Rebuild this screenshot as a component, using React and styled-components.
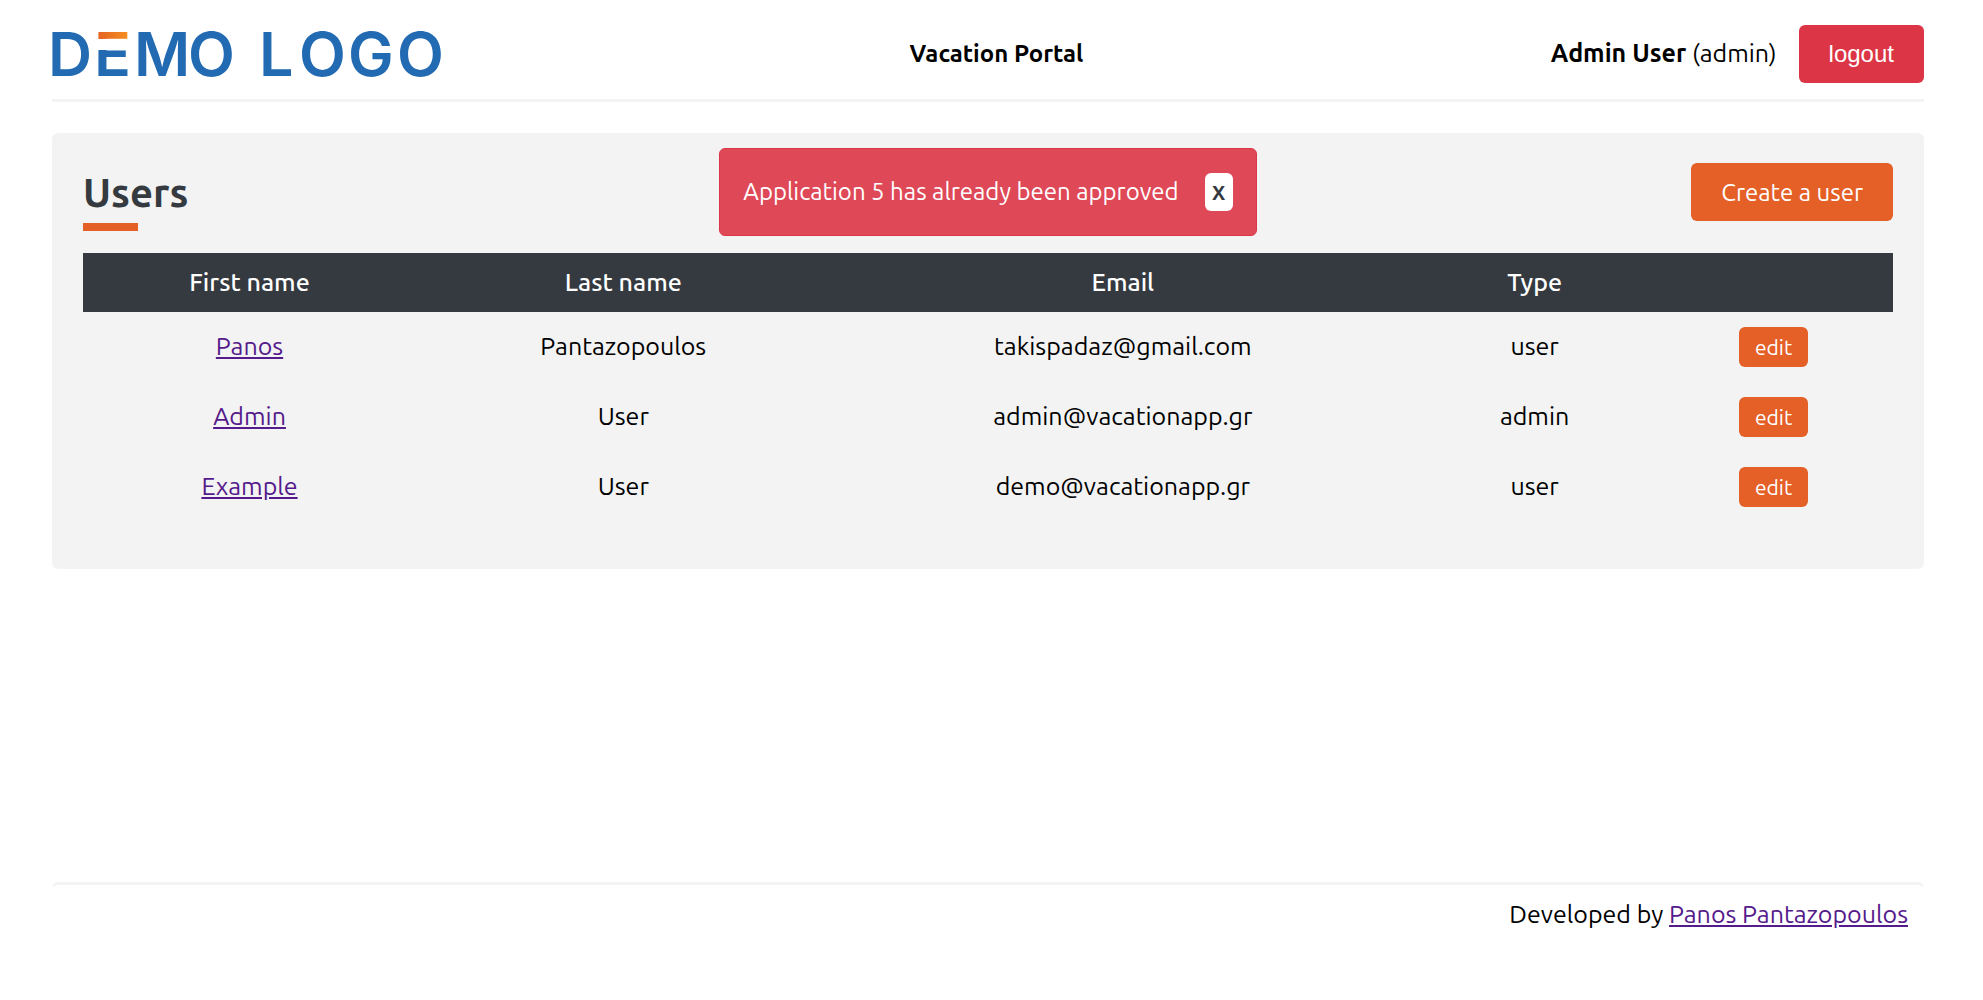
import React, { useState } from "react";
import styled, { createGlobalStyle } from "styled-components";

const colors = {
  orange: "#e46026",
  red: "#dc3545",
  dark: "#343a40",
  panel: "#f3f3f3",
  blue: "#226bb3",
  visited: "#551a8b",
};

const GlobalStyle = createGlobalStyle`
  * { box-sizing: border-box; }
  body {
    margin: 0;
    background: #fff;
    color: #000;
    font-family: Ubuntu, "Noto Sans", sans-serif;
    font-size: 25px;
    line-height: 30px;
  }
`;

const Page = styled.div`
  display: flex;
  flex-direction: column;
  min-height: 100vh;
  padding: 0 59px 0 52px;
`;

const Header = styled.header`
  display: flex;
  align-items: center;
  justify-content: space-between;
  padding: 25px 0 16px;
  border-bottom: 3px solid ${colors.panel};
`;

const LogoImage = styled.svg`
  display: block;
  width: 390px;
  height: 58px;
  overflow: visible;
  fill: ${colors.blue};
  font-family: Inter, sans-serif;
  font-optical-sizing: none;
  font-size: 61px;
  font-weight: 600;
`;

const PortalName = styled.div`
  font-size: 24px;
  font-weight: 700;
`;

const Account = styled.div`
  display: flex;
  align-items: center;
  gap: 22px;
`;

const AccountName = styled.span`
  padding-bottom: 2px;
`;

const Button = styled.button`
  height: ${(p) => (p.$small ? "40px" : "58px")};
  padding: 0 ${(p) => (p.$small ? "16px" : "30px")};
  border: 0;
  border-radius: 6px;
  background: ${(p) => (p.$danger ? colors.red : colors.orange)};
  color: #fff;
  font-family: ${(p) => (p.$danger ? '"Liberation Sans", Arial, sans-serif' : "inherit")};
  font-size: ${(p) => (p.$small ? "21px" : "24px")};
  cursor: pointer;
`;

const Main = styled.main`
  flex: 1;
  padding: 31px 0;
`;

const Panel = styled.section`
  padding: 15px 31px 47px;
  border-radius: 6px;
  background: ${colors.panel};
`;

const PanelHeader = styled.div`
  display: grid;
  grid-template-columns: 1fr auto 1fr;
  align-items: center;
  min-height: 88px;
  margin-bottom: 17px;
`;

const Title = styled.h1`
  align-self: end;
  margin: 0;
  padding-bottom: 5px;
  color: ${colors.dark};
  font-size: 40px;
  font-weight: 700;
  line-height: 52px;

  &::after {
    content: "";
    display: block;
    width: 55px;
    height: 8px;
    margin-top: 4px;
    background: ${colors.orange};
  }
`;

const Alert = styled.div`
  grid-column: 2;
  display: flex;
  align-items: center;
  gap: 26px;
  height: 88px;
  padding: 0 23px;
  border: 1px solid ${colors.red};
  border-radius: 6px;
  background: #de4857;
  color: #fff;
  font-size: 24px;
`;

const CloseButton = styled.button`
  width: 28px;
  height: 38px;
  padding: 0;
  border: 0;
  border-radius: 6px;
  background: #fff;
  color: ${colors.dark};
  font-family: inherit;
  font-size: 20px;
  font-weight: 700;
  cursor: pointer;
`;

const Actions = styled.div`
  grid-column: 3;
  display: flex;
  justify-content: flex-end;
`;

const Table = styled.table`
  width: 100%;
  table-layout: fixed;
  border-collapse: collapse;
  text-align: center;
`;

const Column = styled.col`
  width: ${(p) => p.$width};
`;

const HeadCell = styled.th`
  height: 59px;
  padding: 0 0 2px;
  background: ${colors.dark};
  color: #fff;
  font-weight: 500;
`;

const Cell = styled.td`
  height: 70px;
  padding: 0 0 2px;
`;

const ActionCell = styled.td`
  height: 70px;
  padding: 0;
`;

const Link = styled.a`
  color: ${colors.visited};
  text-decoration: underline;
`;

const Footer = styled.footer`
  min-height: 118px;
  padding: 14px 16px;
  border-top: 3px solid ${colors.panel};
  border-radius: 6px;
  text-align: right;
`;

const users = [
  { first: "Panos", last: "Pantazopoulos", email: "takispadaz@gmail.com", type: "user" },
  { first: "Admin", last: "User", email: "admin@vacationapp.gr", type: "admin" },
  { first: "Example", last: "User", email: "demo@vacationapp.gr", type: "user" },
];

const columnWidths = ["18.4%", "22.9%", "32.3%", "13.2%", "13.2%"];

function Logo() {
  return (
    <LogoImage viewBox="0 0 390 58" role="img" aria-label="Demo logo">
      <defs>
        <linearGradient id="accent" x1="0" x2="1">
          <stop offset="0" stopColor={colors.orange} />
          <stop offset="1" stopColor="#f7941e" />
        </linearGradient>
        <pattern id="split" patternUnits="userSpaceOnUse" x="44" y="0" width="40" height="58">
          <rect width="36" height="14" fill="url(#accent)" />
          <rect y="25" width="40" height="33" fill={colors.blue} />
        </pattern>
      </defs>
      <text y="51">
        <tspan x="-4">D</tspan>
        <tspan x="42" fill="url(#split)">E</tspan>
        <tspan x="82 136">MO</tspan>
        <tspan x="207 247 296 345">LOGO</tspan>
      </text>
    </LogoImage>
  );
}

export default function App() {
  const [alertOpen, setAlertOpen] = useState(true);

  return (
    <>
      <GlobalStyle />
      <Page>
        <Header>
          <Logo />
          <PortalName>Vacation Portal</PortalName>
          <Account>
            <AccountName><strong>Admin User</strong> (admin)</AccountName>
            <Button type="button" $danger>logout</Button>
          </Account>
        </Header>
        <Main>
          <Panel>
            <PanelHeader>
              <Title>Users</Title>
              {alertOpen && (
                <Alert role="alert">
                  <span>Application 5 has already been approved</span>
                  <CloseButton type="button" onClick={() => setAlertOpen(false)}>X</CloseButton>
                </Alert>
              )}
              <Actions>
                <Button type="button">Create a user</Button>
              </Actions>
            </PanelHeader>
            <Table>
              <colgroup>
                {columnWidths.map((width, i) => <Column key={i} $width={width} />)}
              </colgroup>
              <thead>
                <tr>
                  <HeadCell>First name</HeadCell>
                  <HeadCell>Last name</HeadCell>
                  <HeadCell>Email</HeadCell>
                  <HeadCell>Type</HeadCell>
                  <HeadCell />
                </tr>
              </thead>
              <tbody>
                {users.map((user) => (
                  <tr key={user.email}>
                    <Cell><Link href="#">{user.first}</Link></Cell>
                    <Cell>{user.last}</Cell>
                    <Cell>{user.email}</Cell>
                    <Cell>{user.type}</Cell>
                    <ActionCell><Button type="button" $small>edit</Button></ActionCell>
                  </tr>
                ))}
              </tbody>
            </Table>
          </Panel>
        </Main>
        <Footer>
          Developed by <Link href="#">Panos Pantazopoulos</Link>
        </Footer>
      </Page>
    </>
  );
}
